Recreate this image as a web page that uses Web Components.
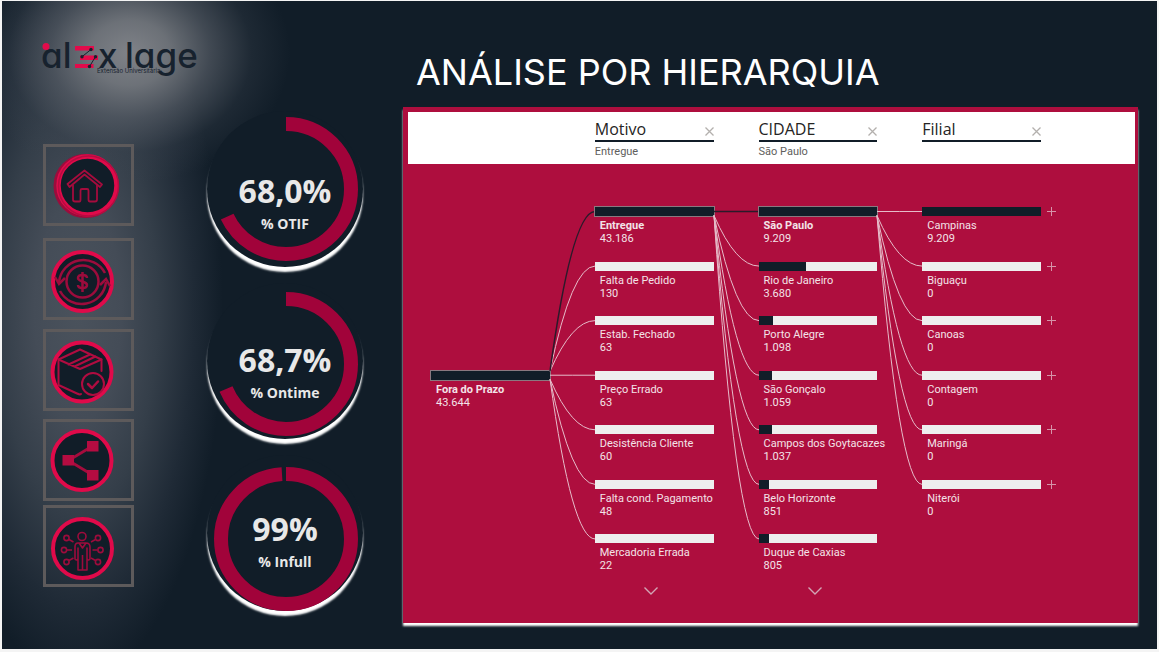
<!DOCTYPE html>
<html lang="pt-BR">
<head>
<meta charset="utf-8">
<title>Análise por Hierarquia</title>
<style>
  html { height: 100%; }
  body {
    margin: 0;
    min-height: 100%;
    background: #f4f4f4;
    font-family: "Open Sans", "Noto Sans", sans-serif;
  }
</style>
</head>
<body>
<dashboard-page></dashboard-page>

<script>
const define = (name, render) => customElements.define(name, class extends HTMLElement {
  connectedCallback() {
    if (this.shadowRoot) return;
    this.attachShadow({ mode: 'open' }).innerHTML = render(this);
  }
});

/* Brand mark */
define('brand-logo', () => `
  <style>
    :host { display: block; }
    a { display: block; width: 160px; }
    svg { display: block; overflow: visible; }
    text { font-family: Inter, sans-serif; fill: #17222e; }
    .word { font-size: 35px; font-weight: 500; font-feature-settings: "cv11"; }
    .tag { font-size: 6px; }
  </style>
  <a href="#inicio" aria-label="alex lage">
    <svg width="160" height="60" viewBox="43 26 160 60">
      <text class="word" x="41" y="68">al</text>
      <text class="word" x="98" y="68">x</text>
      <text class="word" x="125" y="68">lage</text>
      <circle cx="46" cy="46.500" r="3.500" fill="#e30b4b"/>
      <path fill="#e30b4b" d="M75 46h19v4.500H75zM80 55.500h18V60H80zM75 64h18.500v4H75z"/>
      <path stroke="#17222e" stroke-width="1" fill="none" d="M91 49.500 82 56.700M95.500 56.700 89.500 66.500"/>
      <g fill="#17222e"><circle cx="91" cy="49.500" r="1.700"/><circle cx="82" cy="56.700" r="1.700"/><circle cx="95.500" cy="56.700" r="1.700"/><circle cx="89.500" cy="66.500" r="1.700"/></g>
      <text class="tag" x="97" y="73">Extensão Universitária</text>
    </svg>
  </a>`);

/* Navigation tiles */
const icons = {
  home: `
    <circle cx="42.500" cy="42" r="30.500" fill="none" stroke="#9c0c3c" stroke-width="3"/>
    <circle cx="44.500" cy="41.500" r="29" fill="#111d28" stroke="#e00a4a" stroke-width="4.500"/>
    <circle cx="45.500" cy="42" r="30" fill="none" stroke="#b50c41" stroke-width="1.500"/>
    <g fill="none" stroke="#a50c3d" stroke-width="1.800" stroke-linejoin="round" stroke-linecap="round">
      <path d="M24.500 40 41.500 26.500 59 40.500 57 43 41.500 30.500 26.500 43z"/>
      <path d="M30 41.500v14q0 2 2 2h4.500q1 0 1-2v-9q0-1.500 1.500-1.500h5q1.500 0 1.500 1.500v9q0 2 1.500 2h5q2 0 2-2v-14"/>
    </g>`,
  money: `
    <circle cx="39.500" cy="43.500" r="29.500" fill="#111d28" stroke="#e00a4a" stroke-width="4"/>
    <g fill="none" stroke="#9c0c3c" stroke-width="2.500">
      <circle cx="39.500" cy="43.500" r="16"/>
      <path d="M62 35A24.500 24.500 0 0 0 16 44M17 53A24.500 24.500 0 0 0 63 44"/>
      <path d="m12 39 4 7 6-6M57 47l6-6 4 7M39.500 34v20"/>
      <path d="M44 40c0-4-9-4-9 0s9 3 9 7-9 4-9 0"/>
    </g>`,
  package: `
    <circle cx="39" cy="43" r="29.500" fill="#111d28" stroke="#e00a4a" stroke-width="4"/>
    <g fill="none" stroke="#b00c40" stroke-width="2" stroke-linejoin="round" stroke-linecap="round">
      <path d="M58.500 42V30.500L37 20.500 15.500 30.500V56L34 64.500q3 1.500 4 .500"/>
      <path d="M15.500 30.500 37 40l21.500-9.500M25.500 35.500l21.500-10M31.500 37.500 52.500 27.500"/>
      <circle cx="50" cy="55" r="11"/><path stroke-width="2.500" d="m45 55 4 4 6-6.500"/>
    </g>`,
  share: `
    <circle cx="39" cy="41.500" r="29.500" fill="#111d28" stroke="#e00a4a" stroke-width="4"/>
    <path d="M49.500 27 25.500 41.500 49.500 56" fill="none" stroke="#a50c3d" stroke-width="2.800"/>
    <path d="M44 22h11.500v10.500H44zM19.500 36H31v10.500H19.500zM44 51h11.500v10.500H44z" fill="#b50c41"/>`,
  person: `
    <circle cx="39.500" cy="43.500" r="29.500" fill="#111d28" stroke="#e00a4a" stroke-width="4"/>
    <g fill="none" stroke="#9c0c3c" stroke-width="1.600" stroke-linejoin="round">
      <circle cx="39" cy="31.500" r="4"/>
      <path d="M35 38h8q4 0 4 4v12q-1 2-3 0V43v22h-9V43v11q-2 2-3 0V42q0-4 3-4zM39.500 50v15M36 38l3.500 5 3.500-5"/>
      <circle cx="23.500" cy="33" r="2.600"/><circle cx="21" cy="45" r="2.600"/><circle cx="23.500" cy="57" r="2.600"/>
      <circle cx="55" cy="33" r="2.600"/><circle cx="57.500" cy="45" r="2.600"/><circle cx="55" cy="57" r="2.600"/>
      <path d="m26 34.500 4.500 2.500M24 45h5M26 55.500l4.500-2.500M52.500 34.500 48 37M54.500 45h-5M52.500 55.500 48 53"/>
    </g>`
};
define('nav-tile', el => `
  <style>
    :host { display: block; height: 82px; }
    a { display: block; box-sizing: border-box; height: 100%; border: 3px solid #5d5a5b; }
    svg { display: block; margin: -3px; }
  </style>
  <a href="#${el.getAttribute('icon')}" aria-label="${el.getAttribute('name')}">
    <svg width="91" height="82" viewBox="0 0 91 82">${icons[el.getAttribute('icon')]}</svg>
  </a>`);
define('side-nav', () => `
  <style>
    :host { display: block; }
    nav { display: grid; width: 91px; grid-template-rows: 94px 91px 90px 86px 82px; }
  </style>
  <nav>
    <nav-tile icon="home" name="Início"></nav-tile>
    <nav-tile icon="money" name="Custos"></nav-tile>
    <nav-tile icon="package" name="Entregas"></nav-tile>
    <nav-tile icon="share" name="Hierarquia"></nav-tile>
    <nav-tile icon="person" name="Clientes"></nav-tile>
  </nav>`);

/* Gauges: raised discs, progress rings and captions share one grid cell */
define('gauge-ring', el => `
  <style>
    :host { display: block; }
    svg { display: block; transform: rotate(-90deg); }
  </style>
  <svg width="144" height="144" viewBox="0 0 144 144">
    <circle cx="72" cy="72" r="65" fill="none" stroke="#a1033a" stroke-width="14"
      pathLength="1000" stroke-dasharray="${el.getAttribute('value')} 1000"/>
  </svg>`);
define('gauge-caption', () => `
  <style>
    :host { display: block; text-align: center; color: #e8e8e8; font-weight: 700; }
    .value { font-size: 32px; line-height: 40px; }
    .label { margin-top: 3px; font-size: 14px; line-height: 20px; }
  </style>
  <div class="value"><slot name="value"></slot></div>
  <div class="label"><slot></slot></div>`);
define('kpi-gauges', () => `
  <style>
    :host { display: grid; width: 158px; align-content: start; }
    .layer { grid-area: 1 / 1; display: grid; justify-items: center; align-content: start; }
    .discs { gap: 16px; padding-top: 110px; }
    .rings { gap: 31px; padding: 116px 0 0 2px; }
    .captions { gap: 106px; padding-top: 170px; }
    .disc {
      width: 156px; height: 156px; border-radius: 50%;
      background: #111d28; box-shadow: 0 5px 2px #fff;
    }
  </style>
  <div class="layer discs"><div class="disc"></div><div class="disc"></div><div class="disc"></div></div>
  <div class="layer rings">
    <gauge-ring value="680"></gauge-ring><gauge-ring value="687"></gauge-ring><gauge-ring value="990"></gauge-ring>
  </div>
  <div class="layer captions">
    <gauge-caption><span slot="value">68,0%</span>% OTIF</gauge-caption>
    <gauge-caption><span slot="value">68,7%</span>% Ontime</gauge-caption>
    <gauge-caption><span slot="value">99%</span>% Infull</gauge-caption>
  </div>`);

/* Decomposition tree */
define('tree-node', el => `
  <style>
    :host { display: block; min-width: 0; color: #f3e3e8; font: 11px/13px Roboto, sans-serif; white-space: nowrap; }
    .bar { height: 9px; background: #eee; }
    .fill { height: 100%; width: ${el.getAttribute('fill')}%; background: #111d28; }
    :host([selected]) .fill { outline: 1px solid #8a7880; }
    :host([selected]) .label { font-weight: 700; }
    .text { padding: 3px 0 0 5px; }
  </style>
  <div class="bar"><div class="fill"></div></div>
  <div class="text"><div class="label"><slot></slot></div><div>${el.getAttribute('value')}</div></div>`);

define('tree-level', () => `
  <style>
    :host { display: grid; grid-template-rows: repeat(7, minmax(0, 1fr)); min-width: 0; }
    ::slotted([root]) { grid-row: 4; }
  </style>
  <slot></slot>`);

/* Curves from the selected bar (row "from") to every row of the next level */
define('tree-links', el => {
  const from = +el.getAttribute('from'), count = +el.getAttribute('count'), dark = el.hasAttribute('active');
  const y = i => 4.5 + i * 382 / 7;
  let paths = '';
  for (let i = count - 1; i >= 0; i--) {
    const start = y(from) + Math.sign(i - from) * 4;
    paths += `<path d="M0 ${start}Q22 ${y(i)} 45 ${y(i)}"${dark && i === 0 ? ' class="active"' : ''}/>`;
  }
  return `
  <style>
    :host { display: block; min-height: 0; }
    svg { display: block; width: 100%; height: 100%; overflow: visible; }
    path { fill: none; stroke: #e6bcc9; stroke-width: 1; vector-effect: non-scaling-stroke; }
    .active { stroke: #2b1a2a; stroke-width: 1.5; }
  </style>
  <svg viewBox="0 0 45 382" preserveAspectRatio="none">${paths}</svg>`;
});

define('level-header', () => `
  <style>
    :host { display: block; min-width: 0; }
    .head { display: flex; align-items: center; justify-content: space-between; height: 22px; border-bottom: 2px solid #111d28; }
    h2 { margin: 0; color: #252423; font-size: 16px; font-weight: 400; line-height: 22px; }
    button { display: block; width: 9px; height: 9px; margin-top: 4px; padding: 0; border: 0; background: none; }
    svg { display: block; }
    .sub { margin-top: 3px; color: #605e5c; font: 11px/14px Roboto, sans-serif; }
  </style>
  <div class="head">
    <h2><slot></slot></h2>
    <button type="button" aria-label="Remover nível"><svg width="9" height="9" viewBox="0 0 9 9"><path d="m.5.500 8 8m0-8-8 8" stroke="#b3b0ad" stroke-width="1.300"/></svg></button>
  </div>
  <div class="sub"><slot name="sub"></slot></div>`);

define('level-expander', () => `
  <style>
    :host { display: block; }
    button { display: block; width: 14px; height: 8px; padding: 0; border: 0; background: none; }
    svg { display: block; }
  </style>
  <button type="button" aria-label="Mostrar mais"><svg width="14" height="8" viewBox="0 0 14 8"><path d="m.5.500 6.500 6.500L13.500.500" fill="none" stroke="#d2a5b4" stroke-width="1.400"/></svg></button>`);

define('node-adder', () => `
  <style>
    :host { display: block; }
    button { display: block; width: 9px; height: 9px; padding: 0; border: 0; background: none; }
    svg { display: block; }
  </style>
  <button type="button" aria-label="Expandir"><svg width="9" height="9" viewBox="0 0 9 9"><path d="M4.500 0v9M0 4.500h9" stroke="#d693a8" stroke-width="1"/></svg></button>`);

define('decomposition-tree', () => `
  <style>
    :host {
      --levels: minmax(0, 1fr) 45px minmax(0, 1fr) 45px minmax(0, 1fr) 45px minmax(0, 1fr);
      display: flex; flex-direction: column; box-sizing: border-box; flex: 1;
      padding: 5px 3px 0 5px; background: #ae0e3e; box-shadow: 0 3px 2px #fff;
    }
    .header {
      display: grid; grid-template-columns: var(--levels); box-sizing: border-box; min-height: 52px;
      padding: 6px 94px 0 23px; background: #fff;
    }
    .tree { display: grid; grid-template-columns: var(--levels) 20px; padding: 43px 74px 0 23px; }
    .tree > * { grid-row: 1; min-height: 382px; }
    .header :nth-child(1) { grid-column: 3; }
    .header :nth-child(2) { grid-column: 5; }
    .header :nth-child(3) { grid-column: 7; }
    .adders { padding-left: 6px; }
    .more { display: grid; grid-template-columns: var(--levels); padding: 0 94px 24px 23px; }
    .more > * { justify-self: center; padding-right: 6px; margin-top: -2px; }
    .more :nth-child(1) { grid-column: 3; }
    .more :nth-child(2) { grid-column: 5; }
  </style>
  <div class="header">
    <level-header>Motivo<span slot="sub">Entregue</span></level-header>
    <level-header>CIDADE<span slot="sub">São Paulo</span></level-header>
    <level-header>Filial</level-header>
  </div>
  <div class="tree">
    <tree-level><tree-node root selected fill="100" value="43.644">Fora do Prazo</tree-node></tree-level>
    <tree-links from="3" count="7" active></tree-links>
    <tree-level>
      <tree-node selected fill="100" value="43.186">Entregue</tree-node>
      <tree-node fill="0" value="130">Falta de Pedido</tree-node>
      <tree-node fill="0" value="63">Estab. Fechado</tree-node>
      <tree-node fill="0" value="63">Preço Errado</tree-node>
      <tree-node fill="0" value="60">Desistência Cliente</tree-node>
      <tree-node fill="0" value="48">Falta cond. Pagamento</tree-node>
      <tree-node fill="0" value="22">Mercadoria Errada</tree-node>
    </tree-level>
    <tree-links from="0" count="7" active></tree-links>
    <tree-level>
      <tree-node selected fill="100" value="9.209">São Paulo</tree-node>
      <tree-node fill="40" value="3.680">Rio de Janeiro</tree-node>
      <tree-node fill="12" value="1.098">Porto Alegre</tree-node>
      <tree-node fill="11" value="1.059">São Gonçalo</tree-node>
      <tree-node fill="11" value="1.037">Campos dos Goytacazes</tree-node>
      <tree-node fill="9" value="851">Belo Horizonte</tree-node>
      <tree-node fill="9" value="805">Duque de Caxias</tree-node>
    </tree-level>
    <tree-links from="0" count="6"></tree-links>
    <tree-level>
      <tree-node fill="100" value="9.209">Campinas</tree-node>
      <tree-node fill="0" value="0">Biguaçu</tree-node>
      <tree-node fill="0" value="0">Canoas</tree-node>
      <tree-node fill="0" value="0">Contagem</tree-node>
      <tree-node fill="0" value="0">Maringá</tree-node>
      <tree-node fill="0" value="0">Niterói</tree-node>
    </tree-level>
    <tree-level class="adders">
      <node-adder></node-adder><node-adder></node-adder><node-adder></node-adder>
      <node-adder></node-adder><node-adder></node-adder><node-adder></node-adder>
    </tree-level>
  </div>
  <div class="more"><level-expander></level-expander><level-expander></level-expander></div>`);

define('dashboard-page', () => `
  <style>
    :host { display: block; box-sizing: border-box; min-height: 100vh; padding: 1px 2px 3px; }
    .page {
      display: flex; box-sizing: border-box; min-height: calc(100vh - 4px); padding-right: 19px;
      background:
        radial-gradient(ellipse 160px 130px at 128px 52px, #7f8288 0%, #74787ee8 25%, #5a6069a8 50%, #3a434e50 76%, #111d2800 100%),
        radial-gradient(ellipse 145px 370px at 76px 310px, #4a525c 0%, #444c57 30%, #343e49 55%, #1f2a36 80%, #111d2800 100%),
        #111d28;
    }
    aside { flex: none; box-sizing: border-box; width: 204px; padding: 25px 0 0 41px; }
    side-nav { margin-top: 58px; }
    kpi-gauges { flex: none; }
    main { display: flex; flex-direction: column; flex: 1; min-width: 0; padding: 49px 0 26px 39px; }
    h1 { margin: 0 0 13px; padding-left: 13px; color: #fff; font: 400 36px/44px Inter, sans-serif; }
  </style>
  <div class="page">
    <aside><brand-logo></brand-logo><side-nav></side-nav></aside>
    <kpi-gauges></kpi-gauges>
    <main>
      <h1>ANÁLISE POR HIERARQUIA</h1>
      <decomposition-tree></decomposition-tree>
    </main>
  </div>`);
</script>
</body>
</html>
